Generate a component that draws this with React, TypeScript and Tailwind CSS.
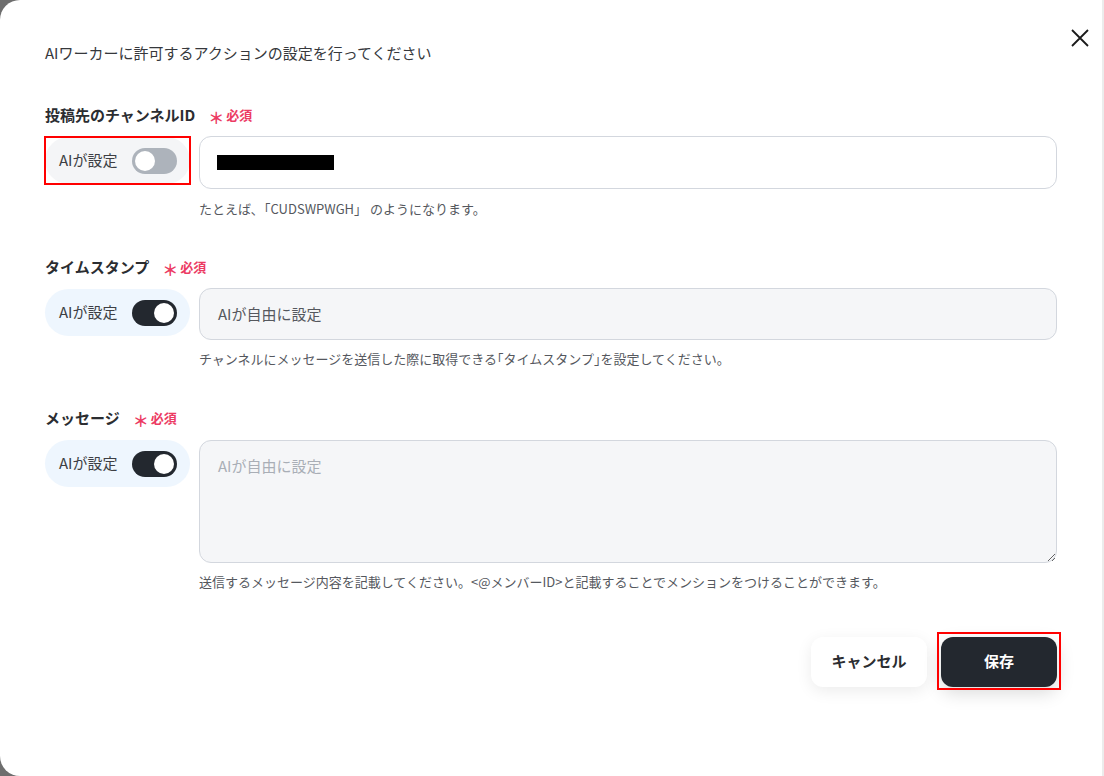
import { useState } from "react";

const font = {
  fontFamily: '"Noto Sans CJK JP", "Noto Sans", "Liberation Sans", sans-serif',
};

interface ToggleChipProps {
  on: boolean;
  highlighted?: boolean;
  onChange: () => void;
}

const ToggleChip: React.FC<ToggleChipProps> = ({ on, highlighted, onChange }) => {
  return (
    <div
      className={`relative mt-[1px] flex h-[47px] w-[145px] shrink-0 items-center justify-between rounded-full pl-[14px] pr-[13px] ${
        on ? "bg-[#eef6fe]" : "bg-[#f4f5f7]"
      }`}
    >
      <span className="text-[15px] text-[#3d3f44]">AIが設定</span>
      <button
        onClick={onChange}
        className={`flex h-[26px] w-[45px] items-center rounded-full px-[3px] ${
          on ? "justify-end bg-[#23282f]" : "justify-start bg-[#adb3bb]"
        }`}
      >
        <span className="h-[20px] w-[20px] rounded-full bg-white" />
      </button>
      {highlighted && (
        <div className="pointer-events-none absolute -inset-y-[1px] -left-[1px] -right-[1px] border-2 border-[#ff0000]" />
      )}
    </div>
  );
};

const Label = ({ text }: { text: string }) => (
  <div className="flex items-center">
    <span className="text-[15px] font-bold text-[#2b2d31]">{text}</span>
    <span className="ml-[13px] flex items-center text-[13px] font-bold text-[#ec3b63]">
      <span className="mr-[2px] translate-y-[2px] text-[16px] leading-none">＊</span>必須
    </span>
  </div>
);

export default function App() {
  const [channelAi, setChannelAi] = useState(false);
  const [stampAi, setStampAi] = useState(true);
  const [messageAi, setMessageAi] = useState(true);

  return (
    <div className="flex h-[776px] w-[1104px] bg-[#6e6e6e]" style={font}>
      <div className="relative h-[776px] w-[1102px] rounded-l-[20px] bg-white pl-[45px] pr-[45px]">
        <button className="absolute right-[12px] top-[28px] text-[#1a1a1a]">
          <svg width="20" height="20" viewBox="0 0 20 20" fill="none" stroke="currentColor" strokeWidth="1.8">
            <path d="M2 2L18 18M18 2L2 18" />
          </svg>
        </button>

        <p className="pt-[42px] text-[15px] text-[#36383c]">
          AIワーカーに許可するアクションの設定を行ってください
        </p>

        {/* channel id */}
        <div className="mt-[39px]">
          <Label text="投稿先のチャンネルID" />
          <div className="mt-[10px] flex gap-[9px]">
            <ToggleChip on={channelAi} highlighted onChange={() => setChannelAi(!channelAi)} />
            <div className="flex h-[53px] flex-1 items-center rounded-[12px] border border-[#d3d7de] bg-white pl-[17px]">
              <div className="h-[15px] w-[117px] bg-black" />
            </div>
          </div>
          <p className="ml-[154px] mt-[10px] text-[13px] text-[#55585e]">
            たとえば､「CUDSWPWGH」 のようになります。
          </p>
        </div>

        {/* timestamp */}
        <div className="mt-[37px]">
          <Label text="タイムスタンプ" />
          <div className="mt-[10px] flex gap-[9px]">
            <ToggleChip on={stampAi} onChange={() => setStampAi(!stampAi)} />
            <div className="flex h-[52px] flex-1 items-center rounded-[12px] border border-[#d3d7de] bg-[#f5f6f8] pl-[18px] text-[15px] text-[#55585e]">
              AIが自由に設定
            </div>
          </div>
          <p className="ml-[154px] mt-[9px] text-[13px] text-[#55585e]">
            チャンネルにメッセージを送信した際に取得できる｢タイムスタンプ｣を設定してください。
          </p>
        </div>

        {/* message */}
        <div className="mt-[38px]">
          <Label text="メッセージ" />
          <div className="mt-[10px] flex gap-[9px]">
            <ToggleChip on={messageAi} onChange={() => setMessageAi(!messageAi)} />
            <textarea
              disabled
              placeholder="AIが自由に設定"
              className="mt-[1px] h-[123px] flex-1 resize-y rounded-[12px] border border-[#d3d7de] bg-[#f5f6f8] px-[18px] py-[14px] text-[15px] placeholder:text-[#a9aeb6]"
            />
          </div>
          <p className="ml-[154px] mt-[9px] text-[13px] text-[#55585e]">
            送信するメッセージ内容を記載してください。&lt;@メンバーID&gt;と記載することでメンションをつけることができます。
          </p>
        </div>

        <div className="mt-[45px] flex justify-end gap-[14px]">
          <button className="h-[50px] w-[116px] rounded-[12px] bg-white text-[15px] font-bold text-[#2b2d31] shadow-[0_4px_16px_rgba(0,0,0,0.08)]">
            キャンセル
          </button>
          <div className="relative">
            <button className="h-[50px] w-[116px] rounded-[12px] bg-[#23282f] text-[15px] font-bold text-white shadow-[0_6px_18px_rgba(0,0,0,0.15)]">
              保存
            </button>
            <div className="pointer-events-none absolute -bottom-[3px] -left-[4px] -right-[4px] -top-[5px] border-2 border-[#ff0000]" />
          </div>
        </div>
      </div>
      <div className="h-[776px] w-[2px] bg-[#ececec]" />
    </div>
  );
}
